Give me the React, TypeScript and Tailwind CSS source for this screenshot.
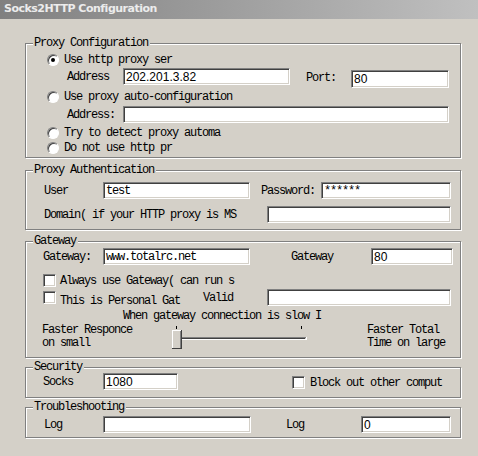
import React from "react";

const T = "font-['Liberation_Mono',monospace] text-[12px] tracking-[-1.2px] text-black whitespace-nowrap";

function Input({ w, h = 17, value, mono, className = "" }: { w: number; h?: number; value?: string; mono?: boolean; className?: string }) {
  return (
    <div
      className={
        "bg-white border border-t-[#808080] border-l-[#808080] border-r-white border-b-white shadow-[inset_1px_1px_0_#404040,inset_-1px_-1px_0_#d4d0c8] flex items-center pl-[2px] overflow-hidden shrink-0 " +
        className
      }
      style={{ width: w, height: h }}
    >
      {value ? (
        mono ? (
          <span className={T}>{value}</span>
        ) : (
          <span className="font-['Liberation_Sans',Arial,sans-serif] text-[12px] leading-none text-black">{value}</span>
        )
      ) : null}
    </div>
  );
}

function Radio({ checked }: { checked?: boolean }) {
  return (
    <div className="w-[12px] h-[12px] rounded-full bg-white border border-t-[#808080] border-l-[#808080] border-r-white border-b-white shadow-[inset_1px_1px_0_#404040] flex items-center justify-center shrink-0">
      {checked ? <div className="w-[4px] h-[4px] rounded-full bg-black" /> : null}
    </div>
  );
}

function Check() {
  return (
    <div className="w-[13px] h-[13px] bg-white border border-t-[#808080] border-l-[#808080] border-r-white border-b-white shadow-[inset_1px_1px_0_#404040,inset_-1px_-1px_0_#d4d0c8] shrink-0" />
  );
}

function Group({ title, h, mt, children }: { title: string; h: number; mt: number; children: React.ReactNode }) {
  return (
    <div
      className="relative border border-[#808080] shadow-[inset_1px_1px_0_#fff,1px_1px_0_#fff] flex flex-col"
      style={{ height: h, marginTop: mt }}
    >
      <span className={T + " absolute left-[7px] -top-[7px] bg-[#d4d0c8] pl-[1px] pr-[2px] leading-[12px]"}>{title}</span>
      {children}
    </div>
  );
}

function Label({ w, children, className = "" }: { w: number; children: React.ReactNode; className?: string }) {
  return (
    <div className={"shrink-0 flex items-center " + className} style={{ width: w }}>
      <span className={T}>{children}</span>
    </div>
  );
}

function Slider() {
  return (
    <svg width="140" height="24" viewBox="0 0 140 24" className="shrink-0">
      <line x1="6.5" y1="1" x2="6.5" y2="4" stroke="#000" strokeWidth="1" />
      <line x1="131.5" y1="1" x2="131.5" y2="4" stroke="#000" strokeWidth="1" />
      <rect x="2" y="12" width="134" height="1" fill="#808080" />
      <rect x="3" y="13" width="132" height="1" fill="#404040" />
      <rect x="2" y="14" width="135" height="1" fill="#ffffff" />
      <rect x="136" y="12" width="1" height="3" fill="#ffffff" />
      <rect x="2" y="5" width="10" height="19" fill="#d4d0c8" />
      <rect x="2" y="5" width="10" height="1" fill="#ffffff" />
      <rect x="2" y="5" width="1" height="19" fill="#ffffff" />
      <rect x="10" y="6" width="1" height="18" fill="#808080" />
      <rect x="11" y="5" width="1" height="19" fill="#404040" />
      <rect x="2" y="23" width="10" height="1" fill="#404040" />
    </svg>
  );
}

export default function App() {
  return (
    <div className="w-[478px] h-[456px] bg-[#d4d0c8] overflow-hidden">
      <div className="h-[19px] bg-gradient-to-r from-[#808080] to-[#c0c0c0] flex items-center pl-[4px]">
        <span className="font-['DejaVu_Sans',sans-serif] font-bold text-[11px] text-[#ececec] tracking-[-0.5px]">
          Socks2HTTP Configuration
        </span>
      </div>

      <div className="pl-[25px] pr-[17px] pt-[24px] flex flex-col">
        {/* Proxy Configuration */}
        <Group title="Proxy Configuration" h={115} mt={0}>
          <div className="mt-[8px] h-[16px] flex items-center pl-[21px] gap-[5px]">
            <Radio checked />
            <span className={T}>Use http proxy ser</span>
          </div>
          <div className="h-[17px] flex items-start pl-[41px]">
            <Label w={56} className="h-[17px]">Address</Label>
            <Input w={167} value="202.201.3.82" />
            <Label w={45} className="h-[17px] ml-[16px] mt-[1px]">Port:</Label>
            <Input w={98} h={18} value="80" className="mt-[2px]" />
          </div>
          <div className="mt-[4px] h-[16px] flex items-center pl-[21px] gap-[5px]">
            <Radio />
            <span className={T}>Use proxy auto-configuration</span>
          </div>
          <div className="mt-[1px] h-[17px] flex items-start pl-[41px]">
            <Label w={56} className="h-[17px]">Address:</Label>
            <Input w={326} />
          </div>
          <div className="mt-[2px] h-[15px] flex items-center pl-[21px] gap-[5px]">
            <Radio />
            <span className={T}>Try to detect proxy automa</span>
          </div>
          <div className="h-[16px] flex items-center pl-[21px] gap-[5px]">
            <Radio />
            <span className={T}>Do not use http pr</span>
          </div>
        </Group>

        {/* Proxy Authentication */}
        <Group title="Proxy Authentication" h={60} mt={12}>
          <div className="mt-[11px] h-[17px] flex items-center pl-[18px]">
            <Label w={59} className="h-[17px]">User</Label>
            <Input w={147} value="test" mono />
            <Label w={60} className="h-[17px] ml-[11px]">Password:</Label>
            <Input w={130} value="******" mono />
          </div>
          <div className="mt-[7px] h-[17px] flex items-center pl-[18px]">
            <Label w={223} className="h-[17px]">Domain( if your HTTP proxy is MS</Label>
            <Input w={184} />
          </div>
        </Group>

        {/* Gateway */}
        <Group title="Gateway" h={117} mt={11}>
          <div className="mt-[6px] h-[17px] flex items-center pl-[17px]">
            <Label w={60} className="h-[17px]">Gateway:</Label>
            <Input w={147} value="www.totalrc.net" mono />
            <Label w={80} className="h-[17px] ml-[41px]">Gateway</Label>
            <Input w={82} value="80" />
          </div>
          <div className="mt-[9px] h-[13px] flex items-center pl-[17px] gap-[4px]">
            <Check />
            <span className={T}>Always use Gateway( can run s</span>
          </div>
          <div className="mt-[2px] h-[17px] flex items-center pl-[17px]">
            <Check />
            <div className="w-[124px] ml-[4px]">
              <span className={T}>This is Personal Gat</span>
            </div>
            <Label w={64} className="h-[17px] ml-[19px]">Valid</Label>
            <Input w={184} />
          </div>
          <div className="mt-[4px] h-[12px] flex items-center pl-[97px]">
            <span className={T + " leading-[12px]"}>When gateway connection is slow I</span>
          </div>
          <div className="mt-[3px] flex items-start pl-[16px]">
            <div className={"w-[128px] -mt-[1px] flex flex-col " + T}>
              <span className="leading-[13px]">Faster Responce</span>
              <span className="leading-[13px]">on small</span>
            </div>
            <Slider />
            <div className={"ml-[57px] -mt-[1px] flex flex-col " + T}>
              <span className="leading-[13px]">Faster Total</span>
              <span className="leading-[13px]">Time on large</span>
            </div>
          </div>
        </Group>

        {/* Security */}
        <Group title="Security" h={31} mt={9}>
          <div className="mt-[5px] h-[17px] flex items-center pl-[17px]">
            <Label w={60} className="h-[17px]">Socks</Label>
            <Input w={75} value="1080" />
            <div className="ml-[114px] flex items-center gap-[5px] mt-[2px]">
              <Check />
              <span className={T}>Block out other comput</span>
            </div>
          </div>
        </Group>

        {/* Troubleshooting */}
        <Group title="Troubleshooting" h={31} mt={9}>
          <div className="mt-[8px] h-[17px] flex items-center pl-[18px]">
            <Label w={59} className="h-[17px]">Log</Label>
            <Input w={148} />
            <Label w={75} className="h-[17px] ml-[35px]">Log</Label>
            <Input w={90} value="0" />
          </div>
        </Group>
      </div>
    </div>
  );
}
